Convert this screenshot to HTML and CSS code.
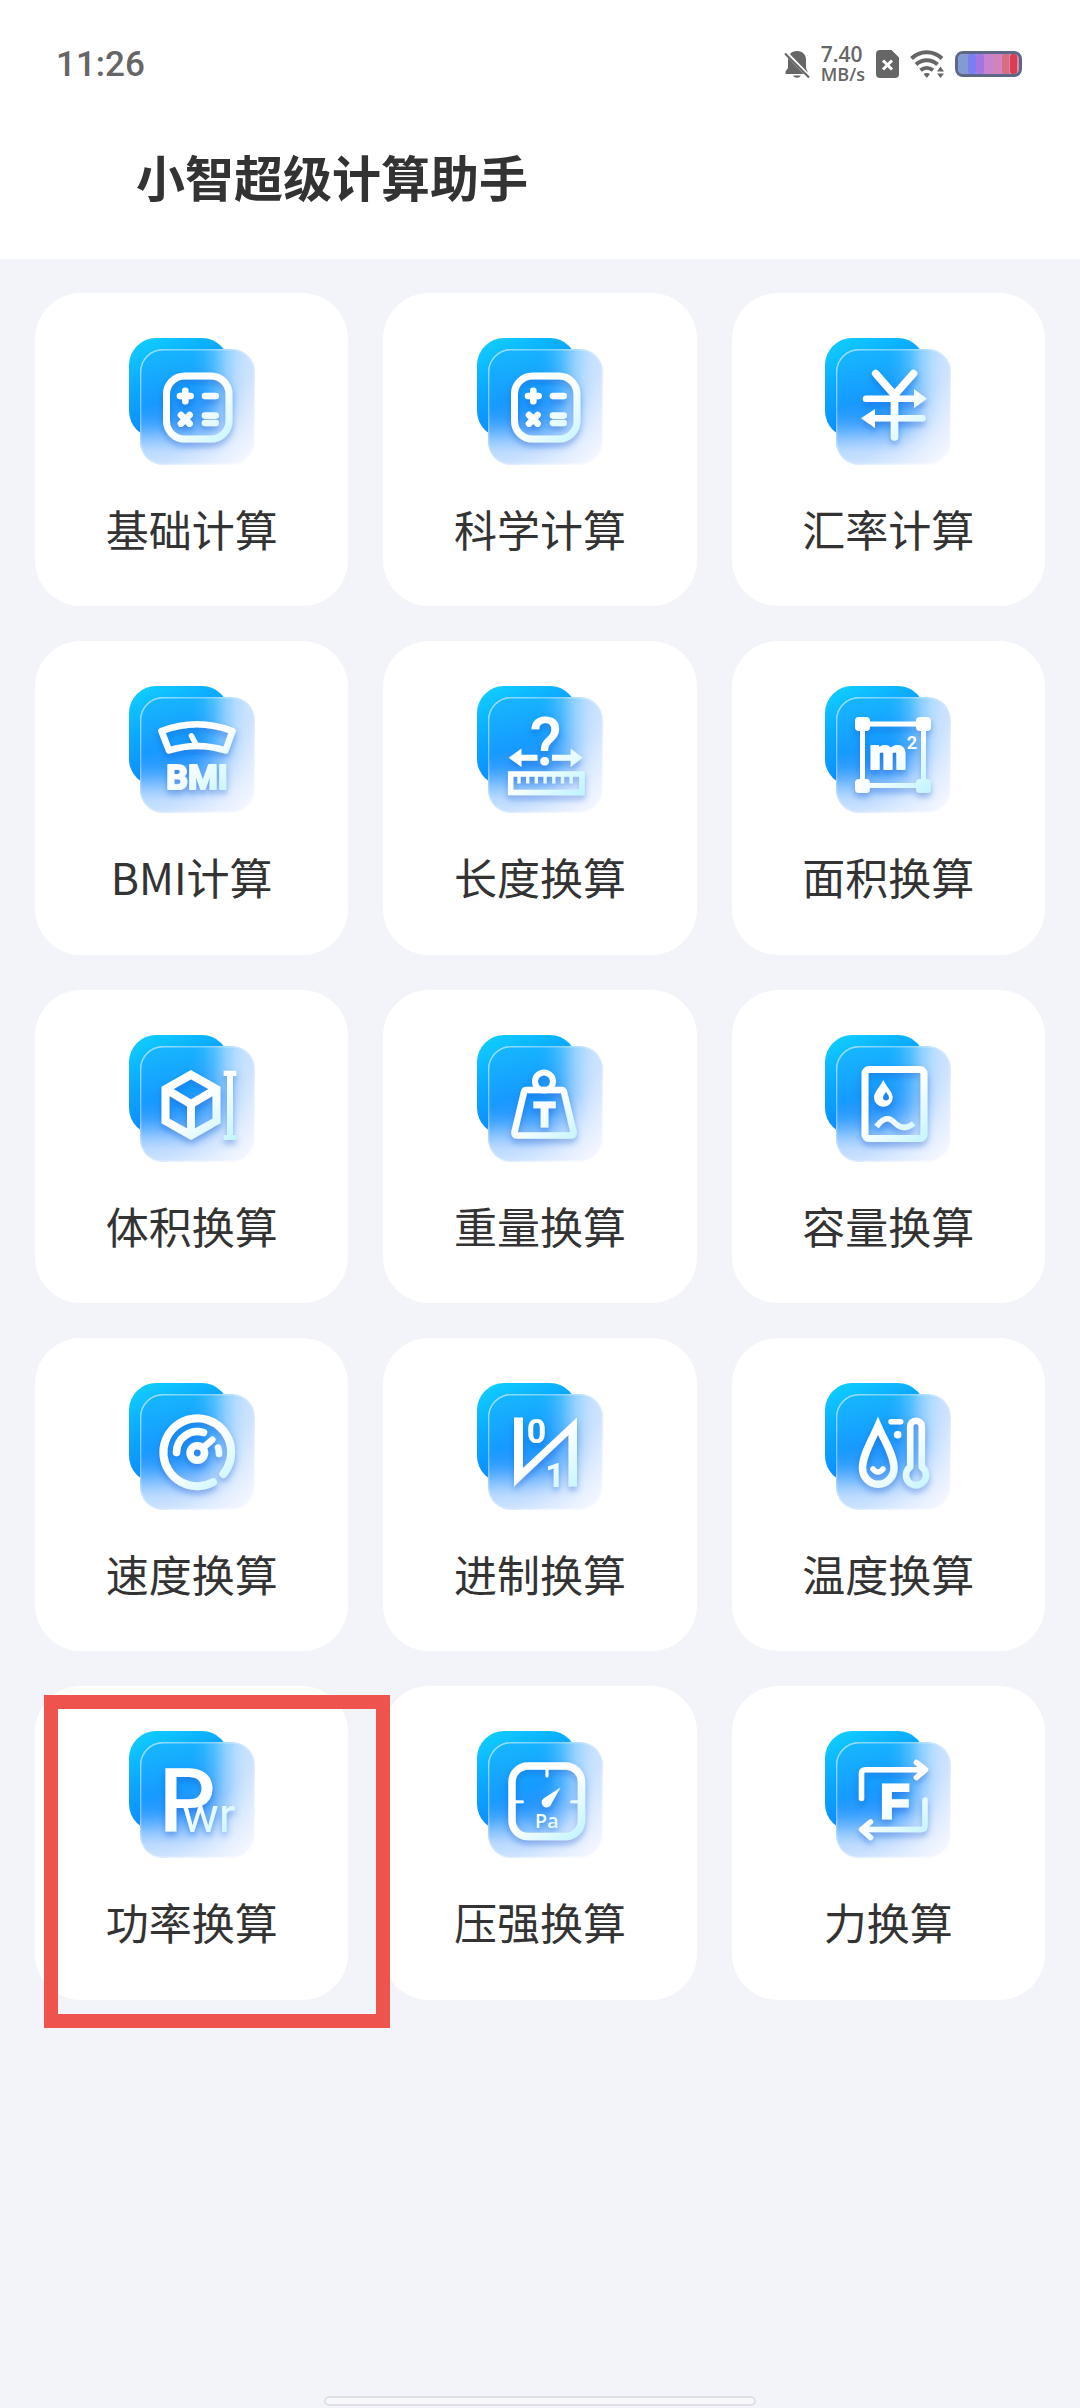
FILE: index.html
```html
<!DOCTYPE html>
<html lang="zh-CN">

<head>
    <meta charset="UTF-8">
    <meta name="viewport" content="width=device-width, initial-scale=1.0">
    <title>小智超级计算助手</title>
    <link rel="stylesheet" href="styles.css">
</head>

<body>
    <!-- shared gradients, filters and the glass tile behind every icon -->
    <svg class="defs" aria-hidden="true">
        <defs>
            <linearGradient id="back" x1="0" y1="0" x2="0.5" y2="1">
                <stop offset="0" stop-color="#10d4ff" />
                <stop offset="0.45" stop-color="#0ca6ff" />
                <stop offset="1" stop-color="#0a82ff" />
            </linearGradient>
            <linearGradient id="front" gradientUnits="userSpaceOnUse" x1="20" y1="10" x2="45" y2="110">
                <stop offset="0" stop-color="#16baff" />
                <stop offset="0.6" stop-color="#1294ff" />
                <stop offset="1" stop-color="#4a98ff" />
            </linearGradient>
            <linearGradient id="glass" x1="0" y1="0" x2="1" y2="1">
                <stop offset="0" stop-color="#b9dcff" />
                <stop offset="0.6" stop-color="#cfe3ff" />
                <stop offset="1" stop-color="#fafaff" />
            </linearGradient>
            <linearGradient id="edge" x1="0" y1="0" x2="1" y2="1">
                <stop offset="0" stop-color="#fff" stop-opacity="0.6" />
                <stop offset="0.5" stop-color="#fff" stop-opacity="0.2" />
                <stop offset="1" stop-color="#fff" stop-opacity="0.7" />
            </linearGradient>
            <linearGradient id="ink" gradientUnits="userSpaceOnUse" x1="40" y1="35" x2="104" y2="108">
                <stop offset="0.45" stop-color="#fff" />
                <stop offset="1" stop-color="#c0f4ff" />
            </linearGradient>
            <clipPath id="frontClip">
                <rect x="11" y="11" width="115" height="116" rx="23" />
            </clipPath>
            <filter id="soft" filterUnits="userSpaceOnUse" x="-80" y="-80" width="260" height="260">
                <feGaussianBlur stdDeviation="14" />
            </filter>
            <filter id="shadow" filterUnits="userSpaceOnUse" x="0" y="0" width="126" height="127">
                <feDropShadow dx="0" dy="4" stdDeviation="3" flood-color="#1b55c8" flood-opacity="0.4" />
            </filter>
            <symbol id="tile" viewBox="0 0 126 127">
                <rect width="100" height="100" rx="27" fill="url(#back)" />
                <g clip-path="url(#frontClip)">
                    <rect x="11" y="11" width="115" height="116" fill="url(#glass)" />
                    <rect x="-60" y="-60" width="151" height="157" rx="27" fill="url(#front)" filter="url(#soft)" />
                </g>
                <rect x="11.7" y="11.7" width="113.6" height="114.6" rx="22.5" fill="none" stroke="url(#edge)" stroke-width="1.4" />
            </symbol>
            <symbol id="calc" viewBox="0 0 126 127">
                <g class="line" filter="url(#shadow)">
                    <rect x="37.5" y="38" width="62.5" height="63" rx="18" stroke-width="7" />
                    <path stroke-width="6.6" d="M51 58H61.6M56.3 52.7V63.3M76 58H86.7M52 77L60.6 85.6M60.6 77L52 85.6M76 77.6H86.7M76 85H86.7" />
                </g>
            </symbol>
        </defs>
    </svg>

    <header class="header">
        <div class="status">
            <span class="time">11:26</span>
            <div class="status-icons">
                <svg class="bell" viewBox="0 0 26 29" aria-hidden="true">
                    <path d="M13 1C7 1 4 5 4 10V18L1.500 21.500V24H23.500V21.500L22 18V10C22 5 19 1 13 1Z M9 25.500A4.300 3.500 0 0 0 17 25.500Z" fill="#666" />
                    <path d="M-1 0L27 28.500" stroke="#fff" stroke-width="4" />
                    <path d="M1 3.500L25 27.500" stroke="#666" stroke-width="2.200" />
                </svg>
                <div class="speed">
                    <span class="speed-num">7.40</span>
                    <span class="speed-unit">MB/s</span>
                </div>
                <svg class="sim" viewBox="0 0 23 28" aria-hidden="true">
                    <path d="M4 0H15.500L23 7.500V24A4 4 0 0 1 19 28H4A4 4 0 0 1 0 24V4A4 4 0 0 1 4 0Z" fill="#666" />
                    <path d="M7 10.500L16 19.500M16 10.500L7 19.500" stroke="#fff" stroke-width="3" />
                </svg>
                <svg class="wifi" viewBox="0 0 34 28" aria-hidden="true">
                    <g fill="none" stroke="#666" stroke-width="4">
                        <path d="M1.500 8.500A22 22 0 0 1 32 8.500" />
                        <path d="M6 14.500A16 16 0 0 1 27.500 14.500" />
                        <path d="M10.500 20.200A10 10 0 0 1 23 20.200" />
                    </g>
                    <path d="M13.500 24A6 6 0 0 1 20 24L16.800 28Z" fill="#666" />
                    <path d="M27 21.500L30.500 16.500L34 21.500ZM27 23.500H34L30.500 28Z" fill="#666" stroke="#fff" stroke-width="1" paint-order="stroke" />
                </svg>
                <svg class="battery" viewBox="0 0 67 26" aria-hidden="true">
                    <clipPath id="cell"><rect x="3" y="3" width="61" height="20" rx="5" /></clipPath>
                    <g clip-path="url(#cell)">
                        <rect width="67" height="26" fill="#829bd2" />
                        <rect x="13" y="3" width="8" height="20" rx="3" fill="#7c7df2" />
                        <rect x="21" y="3" width="8" height="20" rx="3" fill="#a276e0" />
                        <rect x="29" y="3" width="19" height="20" fill="#c983cd" />
                        <rect x="38" y="3" width="10" height="20" fill="#d183bd" />
                        <rect x="47" y="3" width="8" height="20" rx="3" fill="#d76c85" />
                        <rect x="54" y="3" width="10" height="20" fill="#cf8ea8" />
                        <rect x="55" y="3" width="7" height="20" rx="3" fill="#dc3b52" />
                    </g>
                    <rect x="1.500" y="1.500" width="64" height="23" rx="6.500" fill="none" stroke="#5f6788" stroke-width="3" />
                </svg>
            </div>
        </div>
        <h1 class="title">小智超级计算助手</h1>
    </header>

    <main class="grid">
        <a class="card" href="#basic">
            <svg class="icon" viewBox="0 0 126 127" aria-hidden="true">
                <use href="#tile" />
                <use href="#calc" />
            </svg>
            <span class="label">基础计算</span>
        </a>
        <a class="card" href="#science">
            <svg class="icon" viewBox="0 0 126 127" aria-hidden="true">
                <use href="#tile" />
                <use href="#calc" />
            </svg>
            <span class="label">科学计算</span>
        </a>
        <a class="card" href="#currency">
            <svg class="icon" viewBox="0 0 126 127" aria-hidden="true">
                <use href="#tile" />
                <g class="line" filter="url(#shadow)">
                    <path stroke-width="7.500" d="M50.700 35.500L69.500 57L88.500 35.500M69.500 57V99" />
                    <path stroke-width="6.500" d="M41 60.700H90M49 80.300H97.500" />
                    <path class="fill" d="M89 51L102 60.700L89 70ZM50 71L36 80.300L50 90Z" />
                </g>
            </svg>
            <span class="label">汇率计算</span>
        </a>

        <a class="card" href="#bmi">
            <svg class="icon" viewBox="0 0 126 127" aria-hidden="true">
                <use href="#tile" />
                <g class="line" filter="url(#shadow)">
                    <path stroke-width="6.500" d="M32.500 45Q68 31.500 103.500 45L96.500 64.500Q68 55.500 40 64.500Z" />
                    <path stroke-width="5.500" d="M62.500 50L67.500 59" />
                    <text class="glyph thick" x="68" y="103" font-size="34" text-anchor="middle">BMI</text>
                </g>
            </svg>
            <span class="label">BMI计算</span>
        </a>
        <a class="card" href="#length">
            <svg class="icon" viewBox="0 0 126 127" aria-hidden="true">
                <use href="#tile" />
                <g class="line" filter="url(#shadow)">
                    <text class="glyph medium" x="68.500" y="79" font-size="66" text-anchor="middle">?</text>
                    <g class="sharp">
                        <path stroke-width="6" d="M43 71.700H60.500M75 71.700H95" />
                        <rect x="33.700" y="88" width="71.300" height="18.500" stroke-width="5.500" />
                        <path stroke-width="3.200" d="M42 90V97.500M50.700 90V97.500M59.400 90V97.500M68.100 90V97.500M76.800 90V97.500M85.500 90V97.500M94.200 90V97.500" />
                    </g>
                    <path class="fill" d="M44.500 62.500L31.700 71.700L44.500 81ZM93.700 62.500L105.500 71.700L93.700 81Z" />
                </g>
            </svg>
            <span class="label">长度换算</span>
        </a>
        <a class="card" href="#area">
            <svg class="icon" viewBox="0 0 126 127" aria-hidden="true">
                <use href="#tile" />
                <g class="line" filter="url(#shadow)">
                    <rect x="37.500" y="38" width="61" height="61.500" stroke-width="5" />
                    <path class="fill" d="M34 31h7a4 4 0 0 1 4 4v6a4 4 0 0 1-4 4h-7a4 4 0 0 1-4-4v-6a4 4 0 0 1 4-4zM95 31h7a4 4 0 0 1 4 4v6a4 4 0 0 1-4 4h-7a4 4 0 0 1-4-4v-6a4 4 0 0 1 4-4zM34 93h7a4 4 0 0 1 4 4v6a4 4 0 0 1-4 4h-7a4 4 0 0 1-4-4v-6a4 4 0 0 1 4-4zM95 93h7a4 4 0 0 1 4 4v6a4 4 0 0 1-4 4h-7a4 4 0 0 1-4-4v-6a4 4 0 0 1 4-4z" />
                    <text class="glyph heavy thick" x="63" y="83" font-size="43" text-anchor="middle">m</text>
                    <text class="glyph" x="82" y="63" font-size="18">2</text>
                </g>
            </svg>
            <span class="label">面积换算</span>
        </a>

        <a class="card" href="#volume">
            <svg class="icon" viewBox="0 0 126 127" aria-hidden="true">
                <use href="#tile" />
                <g class="line sharp" filter="url(#shadow)">
                    <path stroke-width="8" d="M62 39.700L87.500 54V86L62 100.300L36.500 86V54ZM36.500 54L62 69L87.500 54M62 69V100" />
                    <path class="fill" d="M94.700 35.700H107.300V41H104V100H107.300V105H94.700V100H98V41H94.700Z" />
                </g>
            </svg>
            <span class="label">体积换算</span>
        </a>
        <a class="card" href="#weight">
            <svg class="icon" viewBox="0 0 126 127" aria-hidden="true">
                <use href="#tile" />
                <g class="line" filter="url(#shadow)">
                    <circle cx="67" cy="46.500" r="9" stroke-width="6" />
                    <path stroke-width="6.500" d="M49.500 55H84.500Q86.500 55 87 57L96.500 97Q97 100.500 94 100.500H40Q37 100.500 37.500 97L47 57Q47.500 55 49.500 55Z" />
                    <text class="glyph block" x="67.500" y="91" font-size="33" text-anchor="middle">T</text>
                </g>
            </svg>
            <span class="label">重量换算</span>
        </a>
        <a class="card" href="#capacity">
            <svg class="icon" viewBox="0 0 126 127" aria-hidden="true">
                <use href="#tile" />
                <g class="line sharp" filter="url(#shadow)">
                    <rect x="40" y="34.500" width="59" height="69" rx="4" stroke-width="7" />
                    <path class="fill" fill-rule="evenodd" d="M58.300 45C55 52 49 57 49 62.500A9.300 9.300 0 0 0 67.700 62.500C67.700 57 61.500 52 58.300 45ZM61 56.500C62 59 64 60 64 62.500A3 3 0 0 1 58 62.500C58 60 60 59 61 56.500Z" />
                    <path stroke-width="5.500" d="M51.500 91.500C60 80.500 65 83 70.500 88.500C76 93.500 82 94 88.500 88.500" />
                </g>
            </svg>
            <span class="label">容量换算</span>
        </a>

        <a class="card" href="#speed">
            <svg class="icon" viewBox="0 0 126 127" aria-hidden="true">
                <use href="#tile" />
                <g class="line" filter="url(#shadow)">
                    <path stroke-width="8" d="M84 99.300A33.900 33.900 0 1 1 94.300 91" />
                    <path stroke-width="7.500" d="M47.500 69.500A21 21 0 0 1 74.500 49.500" />
                    <circle cx="68.300" cy="70" r="7.200" stroke-width="7.500" />
                    <path stroke-width="6.500" d="M74.500 64.500L83.300 56.700M89 64.500Q90 67 90 71" />
                </g>
            </svg>
            <span class="label">速度换算</span>
        </a>
        <a class="card" href="#radix">
            <svg class="icon" viewBox="0 0 126 127" aria-hidden="true">
                <use href="#tile" />
                <g class="line" filter="url(#shadow)">
                    <path class="fill" d="M37 34.500H46V85L100 34.500V103.500H91.500V52L37 103.500Z" />
                    <text class="glyph" x="59.500" y="60" font-size="34" text-anchor="middle">0</text>
                    <text class="glyph" x="78" y="103.500" font-size="34" text-anchor="middle">1</text>
                </g>
            </svg>
            <span class="label">进制换算</span>
        </a>
        <a class="card" href="#temperature">
            <svg class="icon" viewBox="0 0 126 127" aria-hidden="true">
                <use href="#tile" />
                <g class="line" filter="url(#shadow)">
                    <path class="sharp" stroke-width="7.500" d="M53 43C47 57 37.500 72 37.500 85A15.700 16.200 0 0 0 69 85C69 72 59 57 53 43Z" />
                    <path stroke-width="5.500" d="M48 86Q53 92 58 86M66 38.700H75.700" />
                    <circle class="fill" cx="72.700" cy="51.700" r="3.800" />
                    <path stroke-width="6.500" d="M85.200 84V43.500A5.800 5.800 0 0 1 96.800 43.500V84A10 10 0 1 1 85.200 84Z" />
                </g>
            </svg>
            <span class="label">温度换算</span>
        </a>

        <a class="card" href="#power">
            <svg class="icon" viewBox="0 0 126 127" aria-hidden="true">
                <use href="#tile" />
                <g class="line" filter="url(#shadow)">
                    <text class="glyph medium" x="30" y="101" font-size="89">P<tspan class="small" x="53">wr</tspan></text>
                </g>
            </svg>
            <span class="label">功率换算</span>
            <span class="highlight"></span>
        </a>
        <a class="card" href="#pressure">
            <svg class="icon" viewBox="0 0 126 127" aria-hidden="true">
                <use href="#tile" />
                <g class="line" filter="url(#shadow)">
                    <rect x="35" y="35" width="69.500" height="70.500" rx="16" stroke-width="7.500" />
                    <path stroke-width="3" d="M70 39V45M39 70.700H45.500M94.500 70.700H101" />
                    <path class="fill" d="M83.500 56.500L74.500 72.500A5 5 0 1 1 66.500 67.500Z" />
                    <text class="glyph unit" x="70" y="97" font-size="20" text-anchor="middle">Pa</text>
                </g>
            </svg>
            <span class="label">压强换算</span>
        </a>
        <a class="card" href="#force">
            <svg class="icon" viewBox="0 0 126 127" aria-hidden="true">
                <use href="#tile" />
                <g class="line" filter="url(#shadow)">
                    <path stroke-width="5.500" d="M36.500 67.500V42.500Q36.500 38.700 40.500 38.700H99M91.500 31.500L100.500 38.700L91.500 46.500" />
                    <path stroke-width="5.500" d="M100 69V94.500Q100 98.500 96 98.500H38M45.500 91L36.500 98.500L45.500 106.500" />
                    <text class="glyph block" x="70" y="87" font-size="48" text-anchor="middle">F</text>
                </g>
            </svg>
            <span class="label">力换算</span>
        </a>
    </main>

    <div class="home-bar"></div>
</body>

</html>
```

FILE: styles.css
```css
* {
    box-sizing: border-box;
}

body {
    margin: 0;
    min-height: 100vh;
    display: flex;
    flex-direction: column;
    background-color: #f3f4f9;
    color: #333;
    font-family: "Noto Sans CJK SC", sans-serif;
}

.defs {
    position: absolute;
    width: 0;
    height: 0;
}

.header {
    background-color: white;
    padding-bottom: 35px;
}

/* status bar */
.status {
    display: flex;
    justify-content: space-between;
    align-items: center;
    height: 128px;
    padding: 0 58px 0 56px;
    color: #666;
    font-family: Roboto, "Open Sans", sans-serif;
}

.time {
    font-size: 35px;
    font-weight: 500;
}

.status-icons {
    display: flex;
    align-items: center;
    gap: 11px;
}

.speed {
    display: flex;
    flex-direction: column;
    font-family: "Open Sans", sans-serif;
    font-weight: 600;
    line-height: 20px;
}

.speed-num {
    font-size: 21px;
}

.speed-unit {
    font-size: 18px;
}

.bell {
    width: 26px;
    height: 29px;
}

.sim {
    width: 23px;
    height: 28px;
}

.wifi {
    width: 34px;
    height: 28px;
}

.battery {
    width: 67px;
    height: 26px;
}

.title {
    margin: 0;
    padding-left: 136px;
    font-size: 49px;
    line-height: 96px;
    font-weight: 700;
}

/* cards */
.grid {
    display: grid;
    grid-template-columns: repeat(3, 1fr);
    gap: 35px;
    padding: 34px 35px;
}

.card {
    position: relative;
    display: flex;
    flex-direction: column;
    align-items: center;
    gap: 33px;
    aspect-ratio: 1;
    padding-top: 45px;
    border-radius: 46px;
    background-color: white;
    color: inherit;
    text-decoration: none;
}

.icon {
    width: 126px;
    height: 127px;
}

.label {
    font-size: 43px;
    line-height: 60px;
}

.line {
    fill: none;
    stroke: url(#ink);
    stroke-linecap: round;
    stroke-linejoin: round;
}

.sharp {
    stroke-linecap: butt;
    stroke-linejoin: miter;
}

.fill {
    fill: url(#ink);
    stroke: none;
}

.glyph {
    fill: url(#ink);
    stroke: none;
    font-family: Roboto, sans-serif;
    font-weight: 700;
}

.heavy {
    font-weight: 900;
}

.medium {
    font-weight: 500;
}

.small {
    font-size: 49px;
    font-weight: 400;
}

.unit {
    font-family: "Open Sans", sans-serif;
    font-weight: 600;
}

.block {
    font-family: "Liberation Sans", sans-serif;
    stroke: url(#ink);
    stroke-width: 3;
    stroke-linejoin: miter;
}

.thick {
    stroke: url(#ink);
    stroke-width: 2;
}

/* red frame over the selected card */
.highlight {
    position: absolute;
    inset: 9px -42px -28px 9px;
    z-index: 1;
    border: 14px solid #ef534d;
    pointer-events: none;
}

.home-bar {
    width: 40%;
    height: 10px;
    margin: auto auto 2px;
    border: 2px solid #dfe0e4;
    border-radius: 5px;
    background-color: #f8f8fa;
}
```
